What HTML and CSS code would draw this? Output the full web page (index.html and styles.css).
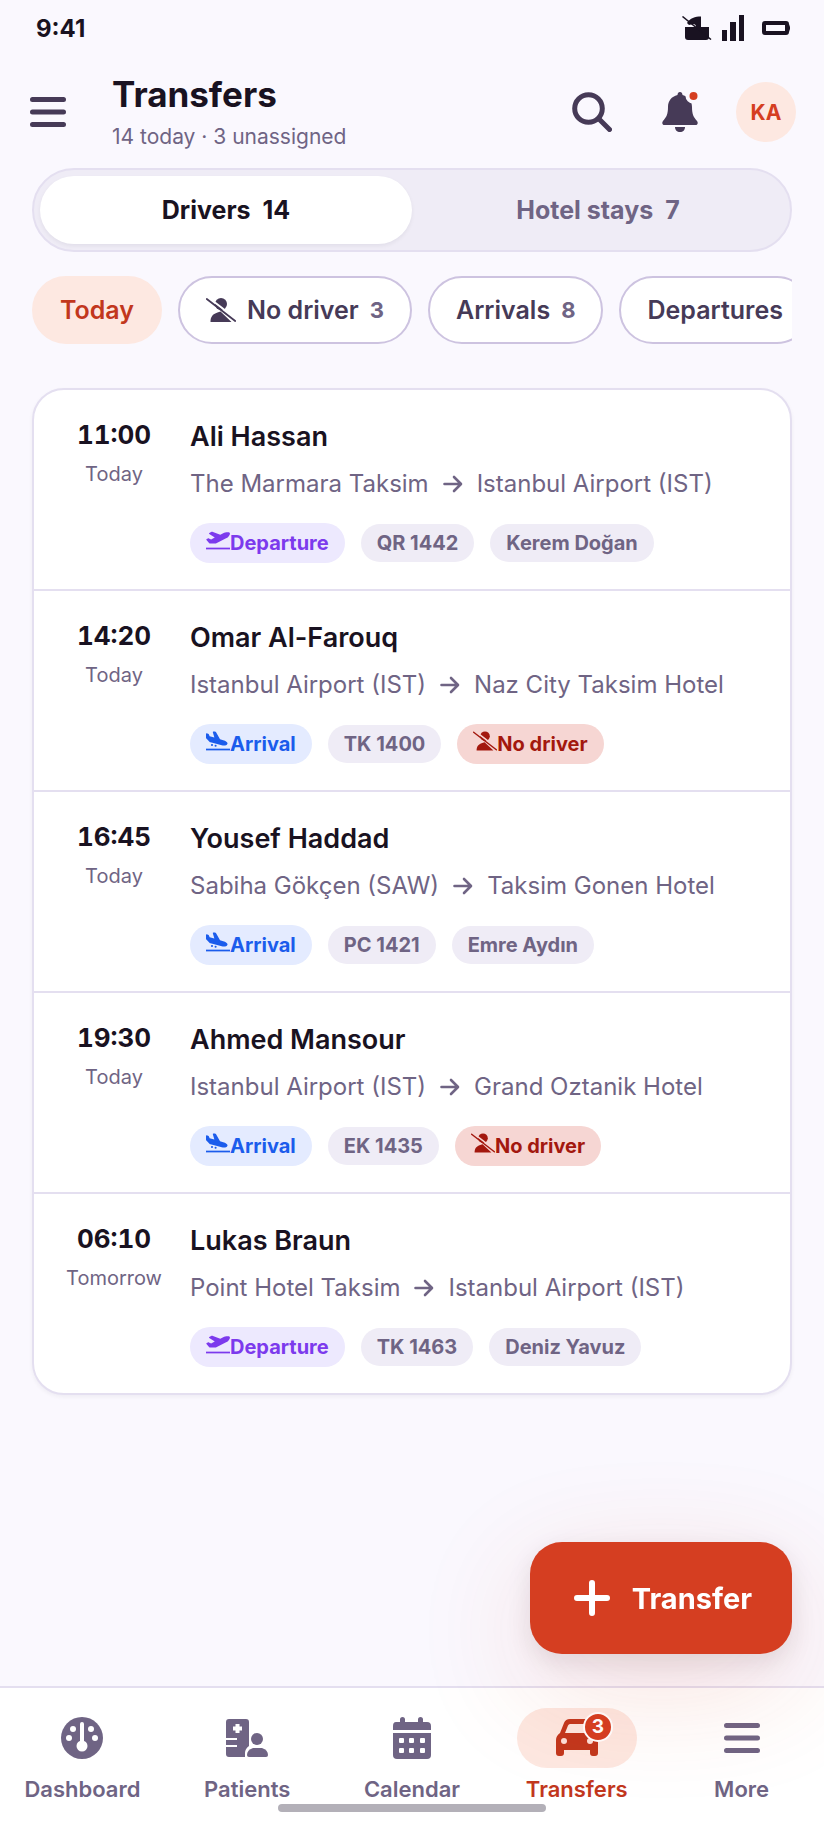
FILE: index.html
```html
<!DOCTYPE html>
<html lang="en">
<head>
    <meta charset="UTF-8">
    <meta name="viewport" content="width=device-width, initial-scale=1.0">
    <title>Transfers</title>
    <link rel="stylesheet" href="styles.css">
</head>
<body>
    <!-- Icon sprite -->
    <svg class="sprite" aria-hidden="true">
        <symbol id="i-menu" viewBox="0 0 36 32">
            <path d="M2.500 3.500h31M2.500 16h31M2.500 28.500h31" fill="none" stroke="currentColor" stroke-width="5" stroke-linecap="round"/>
        </symbol>
        <symbol id="i-arrow" viewBox="0 0 20 20">
            <path d="M1.500 10h16M11 3l7 7-7 7" fill="none" stroke="currentColor" stroke-width="2.600" stroke-linecap="round" stroke-linejoin="round"/>
        </symbol>
        <symbol id="i-driver-off" viewBox="0 0 30 24">
            <circle cx="15" cy="6" r="6"/>
            <path d="M4.500 24c0-5 2-8 7-9.500l3-1 11 10.500z"/>
            <path class="cut" d="M3 0l28 21.500"/>
            <path d="M.8 1l28.400 22" fill="none" stroke="currentColor" stroke-width="1.800" stroke-linecap="round"/>
        </symbol>
        <symbol id="i-departure" viewBox="0 0 640 512">
            <path d="M381 114.900L186.100 41.800c-16.700-6.200-35.200-5.300-51.100 2.700L89.100 67.400C78 73 77.200 88.500 87.600 95.200l146.900 94.500L136 240 77.800 214.100c-8.700-3.900-18.800-3.700-27.300.6L18.300 230.800c-9.300 4.700-11.800 16.800-5 24.700l73.100 85.300c6.100 7.100 15 11.200 24.300 11.200H248.400c5 0 9.900-1.200 14.300-3.400L535.600 212.200c46.500-23.300 82.500-63.300 100.800-112C645.900 75 627.200 48 600.200 48H542.400c-20.200 0-40.200 4.800-58.200 14z"/>
            <path d="M0 460h640v46H0z"/>
        </symbol>
        <symbol id="i-arrival" viewBox="0 0 640 512">
            <path d="M.3 166.900L0 68C0 57.700 9.500 50.100 19.500 52.300l35.600 7.900c10.600 2.300 19.200 9.900 23 20L96 128l127.300 37.600L181.800 20.400C178.900 10.200 186.600 0 197.200 0h40.100c11.600 0 22.200 6.200 27.900 16.300l109 193.800 107.200 31.700c15.900 4.700 30.800 12.500 43.700 22.800l34.400 27.600c24 19.200 18.100 57.300-10.700 68.200-41.200 15.600-86.200 18.100-128.800 7L121.700 289.800c-11.100-2.900-21.200-8.700-29.300-16.900L9.500 189.400c-5.900-6-9.300-14.100-9.300-22.500z"/>
            <circle cx="160" cy="364" r="28"/>
            <circle cx="256" cy="382" r="28"/>
            <path d="M0 460h640v46H0z"/>
        </symbol>
    </svg>

    <div class="status-bar">
        <span class="status-time">9:41</span>
        <div class="status-icons">
            <svg width="30" height="24" viewBox="0 0 30 24"><path d="M3 11h24v10q0 3-3 3H6q-3 0-3-3z"/><path d="M5 7c3-5 8-6.500 14-6.500V11h-5c0-2-1-3-3-3l-4 1z"/><path d="M.5.500L29 23.500" stroke="currentColor" stroke-width="1.500"/></svg>
            <svg width="22" height="28" viewBox="0 0 22 28"><path d="M0 16h5v11H0zM8 8h6v19H8zM17 1h5v26h-5z"/></svg>
            <svg class="battery" width="28" height="14" viewBox="0 0 28 14"><path fill-rule="evenodd" d="M3 0h21q3 0 3 3l1 3v2l-1 3q0 3-3 3H3q-3 0-3-3V3q0-3 3-3zm1 4v6h19V4z"/></svg>
        </div>
    </div>

    <header class="app-bar">
        <button class="icon-btn" aria-label="Menu"><svg width="36" height="32"><use href="#i-menu"/></svg></button>
        <div class="app-heading">
            <h1>Transfers</h1>
            <p>14 today · 3 unassigned</p>
        </div>
        <button class="icon-btn" aria-label="Search">
            <svg width="40" height="40" viewBox="0 0 40 40"><g fill="none" stroke="currentColor" stroke-width="5" stroke-linecap="round"><circle cx="16.500" cy="16.500" r="13.800"/><path d="M27 27l10.500 10.500"/></g></svg>
        </button>
        <button class="icon-btn" aria-label="Notifications">
            <svg width="36" height="40" viewBox="0 0 36 40"><path d="M18 0c1.800 0 2.500 1.500 2.500 3 6 1.500 9.500 6 9.500 12 0 7 1.500 10 5 14 1.500 2 .5 4-1.500 4h-31c-2 0-3-2-1.500-4 3.500-4 5-7 5-14 0-6 3.500-10.500 9.500-12 0-1.500.7-3 2.500-3z"/><path d="M13 35h10c0 3-2 5-5 5s-5-2-5-5z"/><circle cx="31" cy="4" r="7.500" fill="#faf8fe"/><circle cx="31.500" cy="4" r="4" fill="#d53e21"/></svg>
        </button>
        <button class="avatar" aria-label="Account">KA</button>
    </header>

    <main class="content">
        <div class="segment" role="tablist">
            <button class="segment-item active" role="tab" aria-selected="true">Drivers <span>14</span></button>
            <button class="segment-item" role="tab" aria-selected="false">Hotel stays <span>7</span></button>
        </div>

        <div class="chips">
            <button class="chip selected">Today</button>
            <button class="chip"><svg width="30" height="24"><use href="#i-driver-off"/></svg>No driver <span class="count">3</span></button>
            <button class="chip">Arrivals <span class="count">8</span></button>
            <button class="chip">Departures</button>
        </div>

        <ul class="trips">
            <li class="trip">
                <div class="trip-time"><time>11:00</time><span>Today</span></div>
                <div class="trip-info">
                    <h2>Ali Hassan</h2>
                    <p class="route">The Marmara Taksim <svg width="20" height="20"><use href="#i-arrow"/></svg> Istanbul Airport (IST)</p>
                    <div class="tags">
                        <span class="tag departure"><svg width="24" height="20"><use href="#i-departure"/></svg>Departure</span>
                        <span class="tag">QR 1442</span>
                        <span class="tag">Kerem Doğan</span>
                    </div>
                </div>
            </li>
            <li class="trip">
                <div class="trip-time"><time>14:20</time><span>Today</span></div>
                <div class="trip-info">
                    <h2>Omar Al-Farouq</h2>
                    <p class="route">Istanbul Airport (IST) <svg width="20" height="20"><use href="#i-arrow"/></svg> Naz City Taksim Hotel</p>
                    <div class="tags">
                        <span class="tag arrival"><svg width="24" height="20"><use href="#i-arrival"/></svg>Arrival</span>
                        <span class="tag">TK 1400</span>
                        <span class="tag missing"><svg width="24" height="20"><use href="#i-driver-off"/></svg>No driver</span>
                    </div>
                </div>
            </li>
            <li class="trip">
                <div class="trip-time"><time>16:45</time><span>Today</span></div>
                <div class="trip-info">
                    <h2>Yousef Haddad</h2>
                    <p class="route">Sabiha Gökçen (SAW) <svg width="20" height="20"><use href="#i-arrow"/></svg> Taksim Gonen Hotel</p>
                    <div class="tags">
                        <span class="tag arrival"><svg width="24" height="20"><use href="#i-arrival"/></svg>Arrival</span>
                        <span class="tag">PC 1421</span>
                        <span class="tag">Emre Aydın</span>
                    </div>
                </div>
            </li>
            <li class="trip">
                <div class="trip-time"><time>19:30</time><span>Today</span></div>
                <div class="trip-info">
                    <h2>Ahmed Mansour</h2>
                    <p class="route">Istanbul Airport (IST) <svg width="20" height="20"><use href="#i-arrow"/></svg> Grand Oztanik Hotel</p>
                    <div class="tags">
                        <span class="tag arrival"><svg width="24" height="20"><use href="#i-arrival"/></svg>Arrival</span>
                        <span class="tag">EK 1435</span>
                        <span class="tag missing"><svg width="24" height="20"><use href="#i-driver-off"/></svg>No driver</span>
                    </div>
                </div>
            </li>
            <li class="trip">
                <div class="trip-time"><time>06:10</time><span>Tomorrow</span></div>
                <div class="trip-info">
                    <h2>Lukas Braun</h2>
                    <p class="route">Point Hotel Taksim <svg width="20" height="20"><use href="#i-arrow"/></svg> Istanbul Airport (IST)</p>
                    <div class="tags">
                        <span class="tag departure"><svg width="24" height="20"><use href="#i-departure"/></svg>Departure</span>
                        <span class="tag">TK 1463</span>
                        <span class="tag">Deniz Yavuz</span>
                    </div>
                </div>
            </li>
        </ul>
    </main>

    <button class="fab">
        <svg width="36" height="36" viewBox="0 0 36 36"><path d="M18 3v30M3 18h30" stroke="currentColor" stroke-width="6" stroke-linecap="round"/></svg>
        Transfer
    </button>

    <nav class="tab-bar">
        <a class="tab" href="#">
            <span class="tab-icon"><svg width="42" height="42" viewBox="0 0 42 42"><circle cx="21" cy="21" r="21"/><g fill="#fff"><circle cx="12" cy="12" r="3"/><circle cx="30" cy="12" r="3"/><circle cx="8" cy="21" r="3"/><circle cx="34" cy="21" r="3"/><circle cx="21" cy="29" r="5.500"/><rect x="19" y="5" width="4" height="24" rx="2"/></g></svg></span>
            Dashboard
        </a>
        <a class="tab" href="#">
            <span class="tab-icon"><svg width="42" height="38" viewBox="0 0 42 38"><path d="M3 0h17q3 0 3 3v24q-4 3-4 7v4H3q-3 0-3-3V3q0-3 3-3z"/><path d="M11.500 5v9M7 9.500h9" stroke="#fff" stroke-width="4"/><path d="M0 20h11M0 27h11" stroke="#fff" stroke-width="2"/><circle cx="31" cy="20" r="6"/><path d="M27 29h9q6 2 6 7 0 2-2 2H23q-2 0-2-2 0-5 6-7z"/></svg></span>
            Patients
        </a>
        <a class="tab" href="#">
            <span class="tab-icon"><svg width="38" height="42" viewBox="0 0 38 42"><path d="M3 5h4V2.500q0-2.500 2.500-2.500T12 2.500V5h13V2.500Q25 0 27.500 0T30 2.500V5h4q4 0 4 4v4H0V9q0-4 3-4z"/><path d="M0 16h38v22q0 4-4 4H4q-4 0-4-4z"/><g fill="#fff"><rect x="6" y="21" width="5" height="5" rx="1"/><rect x="16" y="21" width="5" height="5" rx="1"/><rect x="27" y="21" width="5" height="5" rx="1"/><rect x="6" y="31" width="5" height="5" rx="1"/><rect x="16" y="31" width="5" height="5" rx="1"/><rect x="27" y="31" width="5" height="5" rx="1"/></g></svg></span>
            Calendar
        </a>
        <a class="tab current" href="#" aria-current="page">
            <span class="tab-icon"><svg width="42" height="38" viewBox="0 0 42 38"><path fill-rule="evenodd" d="M4 14L8 4q1.500-4 6-4h14q4.500 0 6 4l4 10q4 3 4 7v13q0 3-3 3h-2q-3 0-3-3v-3H8v3q0 3-3 3H3q-3 0-3-3V21q0-4 4-7zm5 0h24l-3-7.500Q29.300 5 28 5H14q-1.300 0-2 1.500z"/><g fill="#fce0d9"><circle cx="8" cy="22" r="3"/><circle cx="34" cy="22" r="3"/></g></svg><span class="badge">3</span></span>
            Transfers
        </a>
        <a class="tab" href="#">
            <span class="tab-icon"><svg width="36" height="32"><use href="#i-menu"/></svg></span>
            More
        </a>
        <span class="home-indicator"></span>
    </nav>
</body>
</html>
```
FILE: styles.css
```css
* {
    margin: 0;
    padding: 0;
    box-sizing: border-box;
}

:root {
    --bg: #faf8fe;
    --ink: #191221;
    --ink-2: #463a57;
    --muted: #6f6484;
    --line: #e4dff0;
    --line-strong: #cdc3e0;
    --soft: #efecf6;
    --accent: #d53e21;
    --accent-dark: #c2371d;
    --accent-soft: #fde8e1;
}

body {
    display: flex;
    flex-direction: column;
    min-height: 100vh;
    font-family: Inter, "Liberation Sans", sans-serif;
    background-color: var(--bg);
    color: var(--ink);
}

button {
    font-family: inherit;
    border: none;
    background: none;
    cursor: pointer;
}

svg {
    flex: none;
    fill: currentColor;
}

.sprite {
    position: absolute;
    width: 0;
    height: 0;
}

.cut {
    fill: none;
    stroke: var(--tag-bg, #fff);
    stroke-width: 2px;
}

/* Status bar */
.status-bar {
    display: flex;
    justify-content: space-between;
    align-items: center;
    height: 56px;
    padding: 0 34px 0 36px;
}

.status-time {
    font-size: 24px;
    font-weight: 700;
}

.status-icons {
    display: flex;
    align-items: center;
    gap: 10px;
}

.battery {
    margin-left: 8px;
}

/* App bar */
.app-bar {
    display: flex;
    align-items: center;
    height: 112px;
    padding: 0 28px 0 4px;
}

.icon-btn {
    display: flex;
    justify-content: center;
    align-items: center;
    width: 88px;
    height: 88px;
    color: var(--ink-2);
}

.app-heading {
    flex: 1;
    padding: 6px 0 0 20px;
}

.app-heading h1 {
    font-size: 35px;
    line-height: 44px;
    font-weight: 700;
}

.app-heading p {
    font-size: 21px;
    line-height: 42px;
    color: var(--muted);
}

.avatar {
    width: 60px;
    height: 60px;
    margin-left: 12px;
    border-radius: 50%;
    background: var(--accent-soft);
    color: var(--accent);
    font-size: 21px;
    font-weight: 700;
}

/* Content */
.content {
    flex: 1;
    padding: 0 32px 32px;
}

.segment {
    display: flex;
    padding: 6px;
    border: 2px solid var(--line);
    border-radius: 42px;
    background: var(--soft);
}

.segment-item {
    flex: 1;
    height: 68px;
    border-radius: 34px;
    color: var(--muted);
    font-size: 25px;
    font-weight: 700;
}

.segment-item span {
    margin-left: 6px;
}

.segment-item.active {
    background: #fff;
    color: var(--ink);
    box-shadow: 0 2px 4px rgba(25, 18, 33, 0.06);
}

.chips {
    display: flex;
    gap: 16px;
    margin: 24px 0 44px;
    overflow: hidden;
}

.chip {
    display: flex;
    flex: none;
    align-items: center;
    gap: 11px;
    height: 68px;
    padding: 0 26px;
    border: 2px solid var(--line-strong);
    border-radius: 34px;
    background: #fff;
    color: var(--ink-2);
    font-size: 25px;
    font-weight: 600;
}

.chip.selected {
    border-color: var(--accent-soft);
    background: var(--accent-soft);
    color: var(--accent-dark);
}

.count {
    color: var(--muted);
    font-size: 22px;
    font-weight: 700;
}

/* Trips */
.trips {
    list-style: none;
    border: 2px solid var(--line);
    border-radius: 32px;
    background: #fff;
    box-shadow: 0 2px 4px rgba(25, 18, 33, 0.05);
}

.trip {
    display: flex;
    gap: 20px;
    padding: 28px 24px 26px;
}

.trip + .trip {
    border-top: 2px solid var(--line);
}

.trip-time {
    display: flex;
    flex-direction: column;
    gap: 8px;
    width: 112px;
    text-align: center;
}

.trip-time time {
    font-size: 26px;
    line-height: 34px;
    font-weight: 700;
    font-variant-numeric: tabular-nums;
}

.trip-time span {
    font-size: 20px;
    line-height: 28px;
    color: var(--muted);
}

.trip-info {
    flex: 1;
}

.trip-info h2 {
    font-size: 27px;
    line-height: 38px;
    font-weight: 600;
}

.route {
    display: flex;
    align-items: center;
    gap: 14px;
    margin: 9px 0 20px;
    font-size: 24px;
    line-height: 38px;
    color: var(--muted);
}

.tags {
    display: flex;
    align-items: center;
    gap: 16px;
}

.tag {
    display: flex;
    padding: 0 16px;
    border-radius: 20px;
    background: var(--soft);
    color: var(--muted);
    font-size: 20px;
    line-height: 38px;
    font-weight: 700;
}

.tag svg {
    margin-top: 7px;
}

.tag.departure,
.tag.arrival,
.tag.missing {
    line-height: 40px;
    background: var(--tag-bg);
}

.tag.departure {
    --tag-bg: #ede9fe;
    color: #7c3aed;
}

.tag.arrival {
    --tag-bg: #e4ebff;
    color: #1b5cec;
}

.tag.missing {
    --tag-bg: #f6d6d3;
    color: #a3180e;
}

/* Floating button */
.fab {
    position: fixed;
    right: 32px;
    bottom: 176px;
    z-index: 2;
    display: flex;
    align-items: center;
    gap: 22px;
    height: 112px;
    padding: 0 40px 0 44px;
    border-radius: 32px;
    background: var(--accent);
    color: #fff;
    font-size: 29px;
    font-weight: 700;
    box-shadow: 0 8px 24px rgba(25, 18, 33, 0.1), 0 32px 120px rgba(213, 62, 33, 0.16);
}

/* Bottom tabs */
.tab-bar {
    position: relative;
    display: flex;
    height: 144px;
    padding-top: 20px;
    border-top: 2px solid var(--line);
    background: #fff;
}

.tab {
    display: flex;
    flex: 1 1 0;
    flex-direction: column;
    align-items: center;
    gap: 7px;
    color: var(--muted);
    font-size: 22px;
    line-height: 28px;
    font-weight: 600;
    text-decoration: none;
}

.tab-icon {
    position: relative;
    display: flex;
    justify-content: center;
    align-items: center;
    width: 120px;
    height: 60px;
    border-radius: 30px;
}

.tab.current {
    color: var(--accent-dark);
}

.tab.current .tab-icon {
    background: var(--accent-soft);
}

.badge {
    position: absolute;
    top: 4px;
    right: 24px;
    width: 30px;
    height: 30px;
    border: 2px solid #fff;
    border-radius: 50%;
    background: var(--accent);
    color: #fff;
    font-size: 19px;
    line-height: 26px;
    font-weight: 700;
    text-align: center;
}

.home-indicator {
    position: absolute;
    bottom: 18px;
    left: 50%;
    width: 268px;
    height: 8px;
    margin-left: -134px;
    border-radius: 4px;
    background: #b3b0b8;
}
```
